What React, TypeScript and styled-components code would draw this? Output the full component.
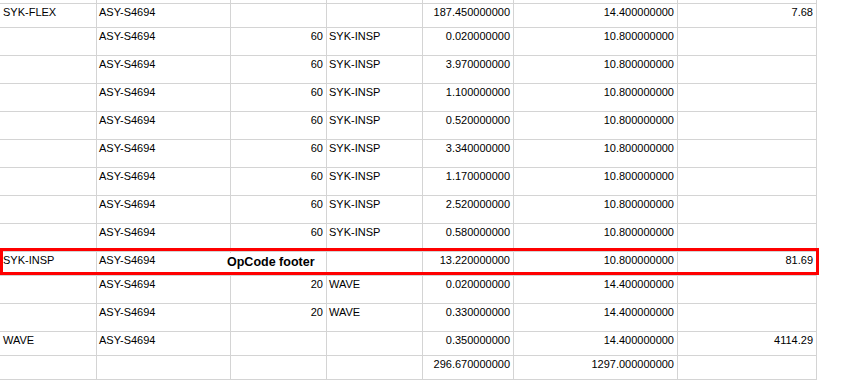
import { FC } from "react";
import styled, { createGlobalStyle } from "styled-components";

const GlobalStyle = createGlobalStyle`
  html, body {
    margin: 0;
    padding: 0;
    background: #FFFFFF;
  }
`;

const COLUMNS = "97px 134px 96px 96px 91px 164px 139px";

type RowKind = "edge" | "group" | "detail";

interface SheetRow {
  kind: RowKind;
  cells: string[];
}

const ROW_HEIGHTS: Record<RowKind, number> = {
  edge: 4,
  group: 24,
  detail: 28,
};

// which columns hold numbers (right aligned)
const RIGHT_ALIGNED = [false, false, true, false, true, true, true];

const detail = (qty: string, op: string, hours: string, rate: string): SheetRow => ({
  kind: "detail",
  cells: ["", "ASY-S4694", qty, op, hours, rate, ""],
});

const rows: SheetRow[] = [
  { kind: "edge", cells: ["", "", "", "", "", "", ""] },
  { kind: "group", cells: ["SYK-FLEX", "ASY-S4694", "", "", "187.450000000", "14.400000000", "7.68"] },
  detail("60", "SYK-INSP", "0.020000000", "10.800000000"),
  detail("60", "SYK-INSP", "3.970000000", "10.800000000"),
  detail("60", "SYK-INSP", "1.100000000", "10.800000000"),
  detail("60", "SYK-INSP", "0.520000000", "10.800000000"),
  detail("60", "SYK-INSP", "3.340000000", "10.800000000"),
  detail("60", "SYK-INSP", "1.170000000", "10.800000000"),
  detail("60", "SYK-INSP", "2.520000000", "10.800000000"),
  detail("60", "SYK-INSP", "0.580000000", "10.800000000"),
  { kind: "group", cells: ["SYK-INSP", "ASY-S4694", "", "", "13.220000000", "10.800000000", "81.69"] },
  detail("20", "WAVE", "0.020000000", "14.400000000"),
  detail("20", "WAVE", "0.330000000", "14.400000000"),
  { kind: "group", cells: ["WAVE", "ASY-S4694", "", "", "0.350000000", "14.400000000", "4114.29"] },
  { kind: "group", cells: ["", "", "", "", "296.670000000", "1297.000000000", ""] },
];

const Sheet = styled.div`
  position: relative;
  width: 867px;
  height: 387px;
  overflow: hidden;
  font-family: "Liberation Sans", Arial, sans-serif;
  font-size: 11px;
  color: #000000;
`;

const Row = styled.div<{ $height: number }>`
  display: grid;
  grid-template-columns: ${COLUMNS};
  height: ${(p) => p.$height}px;
`;

const Cell = styled.div<{ $right: boolean; $first: boolean }>`
  box-sizing: border-box;
  border-right: 1px solid #D4D4D4;
  border-bottom: 1px solid #D4D4D4;
  padding: 2px 3px 0 ${(p) => (p.$first ? 3 : 2)}px;
  line-height: 13px;
  text-align: ${(p) => (p.$right ? "right" : "left")};
  white-space: nowrap;
  overflow: hidden;
`;

const HighlightFrame = styled.div`
  position: absolute;
  left: 0;
  top: 248px;
  width: 819px;
  height: 27px;
  box-sizing: border-box;
  border: 3px solid #FF0000;
`;

const FrameLabel = styled.span`
  position: absolute;
  left: 222px;
  top: 2px;
  height: 19px;
  padding: 0 2px;
  background: #FFFFFF;
  font-family: "Liberation Sans", Arial, sans-serif;
  font-weight: bold;
  font-size: 12.5px;
  line-height: 19px;
  color: #000000;
  white-space: nowrap;
`;

const App: FC = () => {
  return (
    <>
      <GlobalStyle />
      <Sheet>
        {rows.map((row, i) => (
          <Row key={i} $height={ROW_HEIGHTS[row.kind]}>
            {row.cells.map((value, c) => (
              <Cell key={c} $right={RIGHT_ALIGNED[c]} $first={c === 0}>
                {value}
              </Cell>
            ))}
          </Row>
        ))}
        <HighlightFrame>
          <FrameLabel>OpCode footer</FrameLabel>
        </HighlightFrame>
      </Sheet>
    </>
  );
};

export default App;
